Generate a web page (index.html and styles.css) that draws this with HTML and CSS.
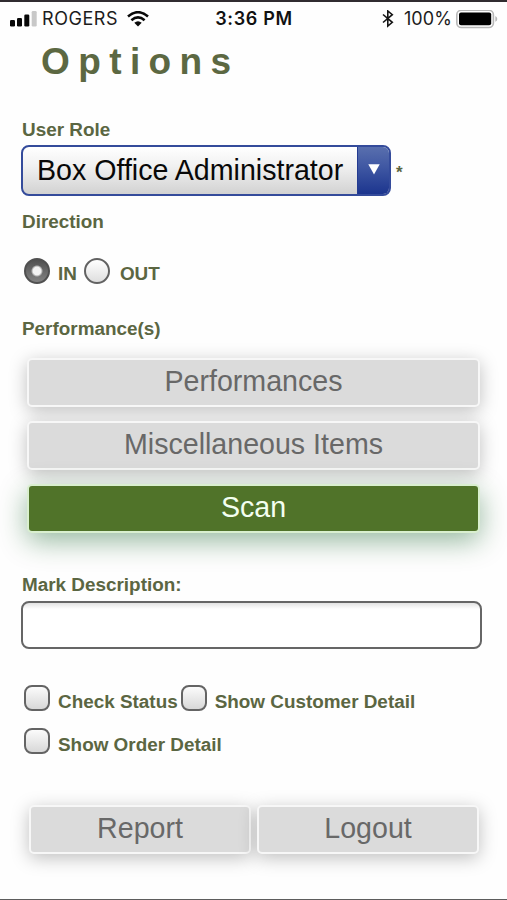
FILE: index.html
```html
<!DOCTYPE html>
<html lang="en">
<head>
<meta charset="utf-8">
<title>Options</title>
<link rel="stylesheet" href="styles.css">
</head>
<body>
<header class="status">
  <div class="carrier">
    <svg class="signal" width="27" height="17" viewBox="0 0 27 17"><g fill="#080808"><rect x="0" y="9" width="5" height="6.5" rx="1.3"/><rect x="7" y="7" width="5" height="8.5" rx="1.3"/><rect x="14.3" y="3.5" width="5" height="12" rx="1.3"/></g><rect x="21.7" y="0" width="5" height="15.5" rx="1.3" fill="#c8c8c8"/></svg>
    <span class="network">ROGERS</span>
    <svg width="22" height="17" viewBox="0 0 22 17"><g fill="none" stroke="#090909" stroke-width="2.6"><path d="M1 5.4Q11-3 21 5.4"/><path d="M4.4 9.2Q11 3.5 17.6 9.2"/></g><path d="M7.3 11.8Q11 8.8 14.7 11.8L11 15.5z" fill="#090909"/></svg>
  </div>
  <span class="clock">3:36 PM</span>
  <div class="power">
    <svg width="12" height="18" viewBox="0 0 12 18" fill="none" stroke="#151515" stroke-width="1.6"><path d="M1 4.5L10.3 12.3L5.8 16V1L10.3 4.7L1 12.5"/></svg>
    <span class="percent">100%</span>
    <svg width="42" height="19" viewBox="0 0 42 19"><rect x=".8" y=".3" width="36.6" height="17.2" rx="4.5" fill="#fff" stroke="#b8b8b8" stroke-width="1.6"/><rect x="3" y="2.5" width="32.2" height="12.8" rx="2" fill="#000"/><path d="M39.3 6Q41.3 7 41.3 8.9T39.3 11.8z" fill="#b8b8b8"/></svg>
  </div>
</header>
<main>
  <h1>Options</h1>
  <div class="label role-label">User Role</div>
  <div class="role">
    <div class="select"><span class="value">Box Office Administrator</span><span class="arrow"><svg width="12" height="11" viewBox="0 0 12 11"><path d="M.3.3H11.7L6 10.4z" fill="#fff"/></svg></span></div>
    <span class="required">*</span>
  </div>
  <div class="label direction-label">Direction</div>
  <div class="choices">
    <span class="radio checked"></span><span class="label in">IN</span>
    <span class="radio"></span><span class="label out">OUT</span>
  </div>
  <div class="label">Performance(s)</div>
  <div class="actions">
    <div class="button">Performances</div>
    <div class="button">Miscellaneous Items</div>
    <div class="button primary">Scan</div>
  </div>
  <div class="label">Mark Description:</div>
  <div class="field"></div>
  <div class="checks">
    <div class="check"><span class="box"></span><span class="label">Check Status</span></div>
    <div class="check"><span class="box"></span><span class="label">Show Customer Detail</span></div>
    <div class="check"><span class="box"></span><span class="label">Show Order Detail</span></div>
  </div>
  <div class="footer">
    <div class="button">Report</div>
    <div class="button">Logout</div>
  </div>
</main>
</body>
</html>
```
FILE: styles.css
```css
* { box-sizing: border-box; }
body {
  margin: 0;
  height: 900px;
  overflow: hidden;
  border-top: 2px solid #302c30;
  border-bottom: 1px solid #5c5c5c;
  background: #fefefe;
  color: #5b6642;
  font-family: "Liberation Sans", Arial, sans-serif;
}
svg { display: block; flex: none; }
.status {
  height: 34px;
  padding: 0 9px 0 10px;
  display: grid;
  grid-template-columns: 1fr auto 1fr;
  align-items: center;
  font: 18px/22px Inter, sans-serif;
  color: #1c1c1c;
}
.carrier, .power { display: flex; align-items: center; }
.network { margin: 0 9px 0 5px; letter-spacing: .55px; }
.clock { font-weight: 600; letter-spacing: .65px; color: #111; }
.power { justify-content: flex-end; }
.percent { margin: 0 4px 0 10px; letter-spacing: .1px; }
main { padding: 0 22px; }
h1 {
  margin: 4px 0 0 19px;
  font-size: 37px;
  line-height: 44px;
  letter-spacing: 8.4px;
  color: #5c6842;
}
.label { font-size: 18.9px; line-height: 22px; font-weight: 700; white-space: nowrap; }
.role-label { margin-top: 35px; }
.role { display: flex; align-items: center; margin: 4px 0 0 -1px; }
.select {
  display: flex;
  width: 370px;
  height: 51px;
  overflow: hidden;
  border: 2px solid #344b9b;
  border-radius: 8px;
  background: linear-gradient(#fff, #f1f1f1 40%, #d2d2d2);
}
.value {
  flex: 1;
  padding-left: 14px;
  font-size: 28.6px;
  line-height: 47px;
  white-space: nowrap;
  color: #080808;
}
.arrow {
  width: 32px;
  padding-bottom: 3px;
  display: flex;
  align-items: center;
  justify-content: center;
  border-left: 1px solid #243b91;
  background: linear-gradient(#596fae, #3e56a2 45%, #1c358e);
}
.required { margin: 4px 0 0 5px; font-size: 17px; line-height: 18px; font-weight: 700; }
.direction-label { margin-top: 15px; }
.choices { display: flex; align-items: flex-start; height: 28px; margin: 25px 0 32px 2px; }
.radio {
  width: 26px;
  height: 26px;
  border: 2px solid #626262;
  border-radius: 50%;
  background: linear-gradient(#fff, #dedede) padding-box;
}
.radio.checked { border-color: #505050; background: radial-gradient(circle, #f2f2f2 0 3.8px, #bbb 4.8px, transparent 6px), linear-gradient(#505050, #828282); }
.in { margin: 5px 7px 0 8px; }
.out { margin: 5px 0 0 10px; }
.actions { display: grid; gap: 14px; margin: 18px 0 41px; padding: 0 5px; }
.button {
  height: 49px;
  border: 2px solid #f7f7f7;
  border-radius: 5px;
  background: #dbdbdb;
  box-shadow: 0 4px 18px rgba(0, 0, 0, .25);
  color: #686868;
  font-size: 28.6px;
  line-height: 42px;
  text-align: center;
}
.primary {
  border-color: #d9efcf;
  background: #507329;
  box-shadow: 0 8px 28px rgba(0, 85, 25, .42);
  color: #f3fff0;
}
.field {
  height: 48px;
  margin: 5px 3px 0 -1px;
  border: 2px solid #666;
  border-radius: 8px;
  background: linear-gradient(#e3e3e3, #fff 6px);
}
.checks { display: flex; flex-wrap: wrap; column-gap: 3px; margin: 36px 0 0 2px; }
.check { display: flex; height: 43px; }
.check .label { margin: 6px 0 0 8px; }
.box {
  width: 26px;
  height: 26px;
  border: 2px solid #646464;
  border-radius: 8px;
  background: linear-gradient(#fbfbfb, #d8d8d8);
}
.footer { display: grid; grid-template-columns: 222px 222px; gap: 6px; margin: 34px 0 0 7px; }
```
